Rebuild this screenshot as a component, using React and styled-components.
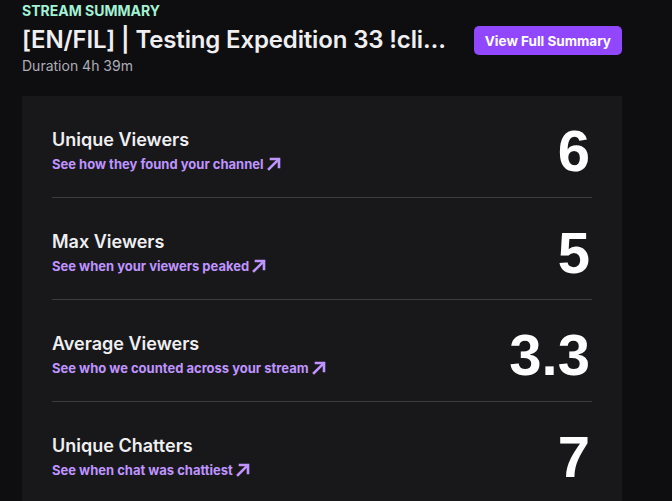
import React from "react";
import styled, { createGlobalStyle } from "styled-components";

const GlobalStyle = createGlobalStyle`
  html, body {
    margin: 0;
    padding: 0;
    background: #0e0e10;
  }
  body {
    font-family: Inter, "Noto Sans", sans-serif;
    color: #efeff1;
  }
`

const Page = styled.div`
  width: 600px;
  padding: 2px 0 0 22px;
`
const Header = styled.div`
  display: flex;
  align-items: flex-start;
  gap: 20px;
  margin-bottom: 21px;
`
const HeaderText = styled.div`
  flex: 1;
  min-width: 0;
`
const Eyebrow = styled.div`
  font-size: 14px;
  line-height: 18px;
  font-weight: 700;
  color: #a3f2d5;
  margin-bottom: 3px;
`
const Title = styled.h1`
  margin: 0;
  font-size: 24px;
  line-height: 34px;
  font-weight: 600;
  letter-spacing: -0.15px;
  color: #efeff1;
  white-space: nowrap;
  overflow: hidden;
  text-overflow: ellipsis;
`
const Duration = styled.div`
  font-size: 14px;
  line-height: 18px;
  color: #adadb8;
`
const Button = styled.button`
  flex: none;
  margin-top: 24px;
  height: 29px;
  padding: 0 11px;
  border: none;
  border-radius: 5px;
  background: #9147ff;
  color: #fff;
  font-family: inherit;
  font-size: 13.5px;
  font-weight: 700;
  cursor: pointer;
`
const Panel = styled.div`
  background: #18181b;
  padding: 0 30px;
  min-height: 420px;
`
const Row = styled.div`
  display: flex;
  align-items: center;
  justify-content: space-between;
  padding: 23px 0 14px;
  border-bottom: 1px solid ${p => (p.$last ? "transparent" : "#3d3d40")};
`
const Info = styled.div`
  display: flex;
  flex-direction: column;
  gap: 4px;
`
const Label = styled.div`
  font-size: 18px;
  line-height: 22px;
  font-weight: 600;
  color: #efeff1;
`
const Link = styled.a`
  display: inline-flex;
  align-items: center;
  gap: 3px;
  font-size: 13px;
  line-height: 18px;
  font-weight: 700;
  color: #bf94ff;
  text-decoration: none;
`
const Value = styled.div`
  font-family: "Liberation Sans", Arial, sans-serif;
  font-size: 58px;
  line-height: 64px;
  font-weight: 700;
  color: #fff;
  padding-right: 2px;
`

function Arrow() {
  return (
    <svg width="14" height="14" viewBox="0 0 14 14" fill="none"
      stroke="currentColor" strokeWidth="2.6" strokeLinecap="square">
      <path d="M2 12 L11.5 2.5" />
      <path d="M4 2 H12 V10" />
    </svg>
  );
}

const stats = [
  { label: "Unique Viewers", link: "See how they found your channel", value: "6" },
  { label: "Max Viewers", link: "See when your viewers peaked", value: "5" },
  { label: "Average Viewers", link: "See who we counted across your stream", value: "3.3" },
  { label: "Unique Chatters", link: "See when chat was chattiest", value: "7" },
];

export default function App() {
  return (
    <>
      <GlobalStyle />
      <Page>
        <Header>
          <HeaderText>
            <Eyebrow>STREAM SUMMARY</Eyebrow>
            <Title>[EN/FIL] | Testing Expedition 33 !clips !discord !socials</Title>
            <Duration>Duration 4h 39m</Duration>
          </HeaderText>
          <Button>View Full Summary</Button>
        </Header>
        <Panel>
          {stats.map((s, i) => (
            <Row key={s.label} $last={i === stats.length - 1}>
              <Info>
                <Label>{s.label}</Label>
                <Link href="#">
                  {s.link}
                  <Arrow />
                </Link>
              </Info>
              <Value>{s.value}</Value>
            </Row>
          ))}
        </Panel>
      </Page>
    </>
  );
}
